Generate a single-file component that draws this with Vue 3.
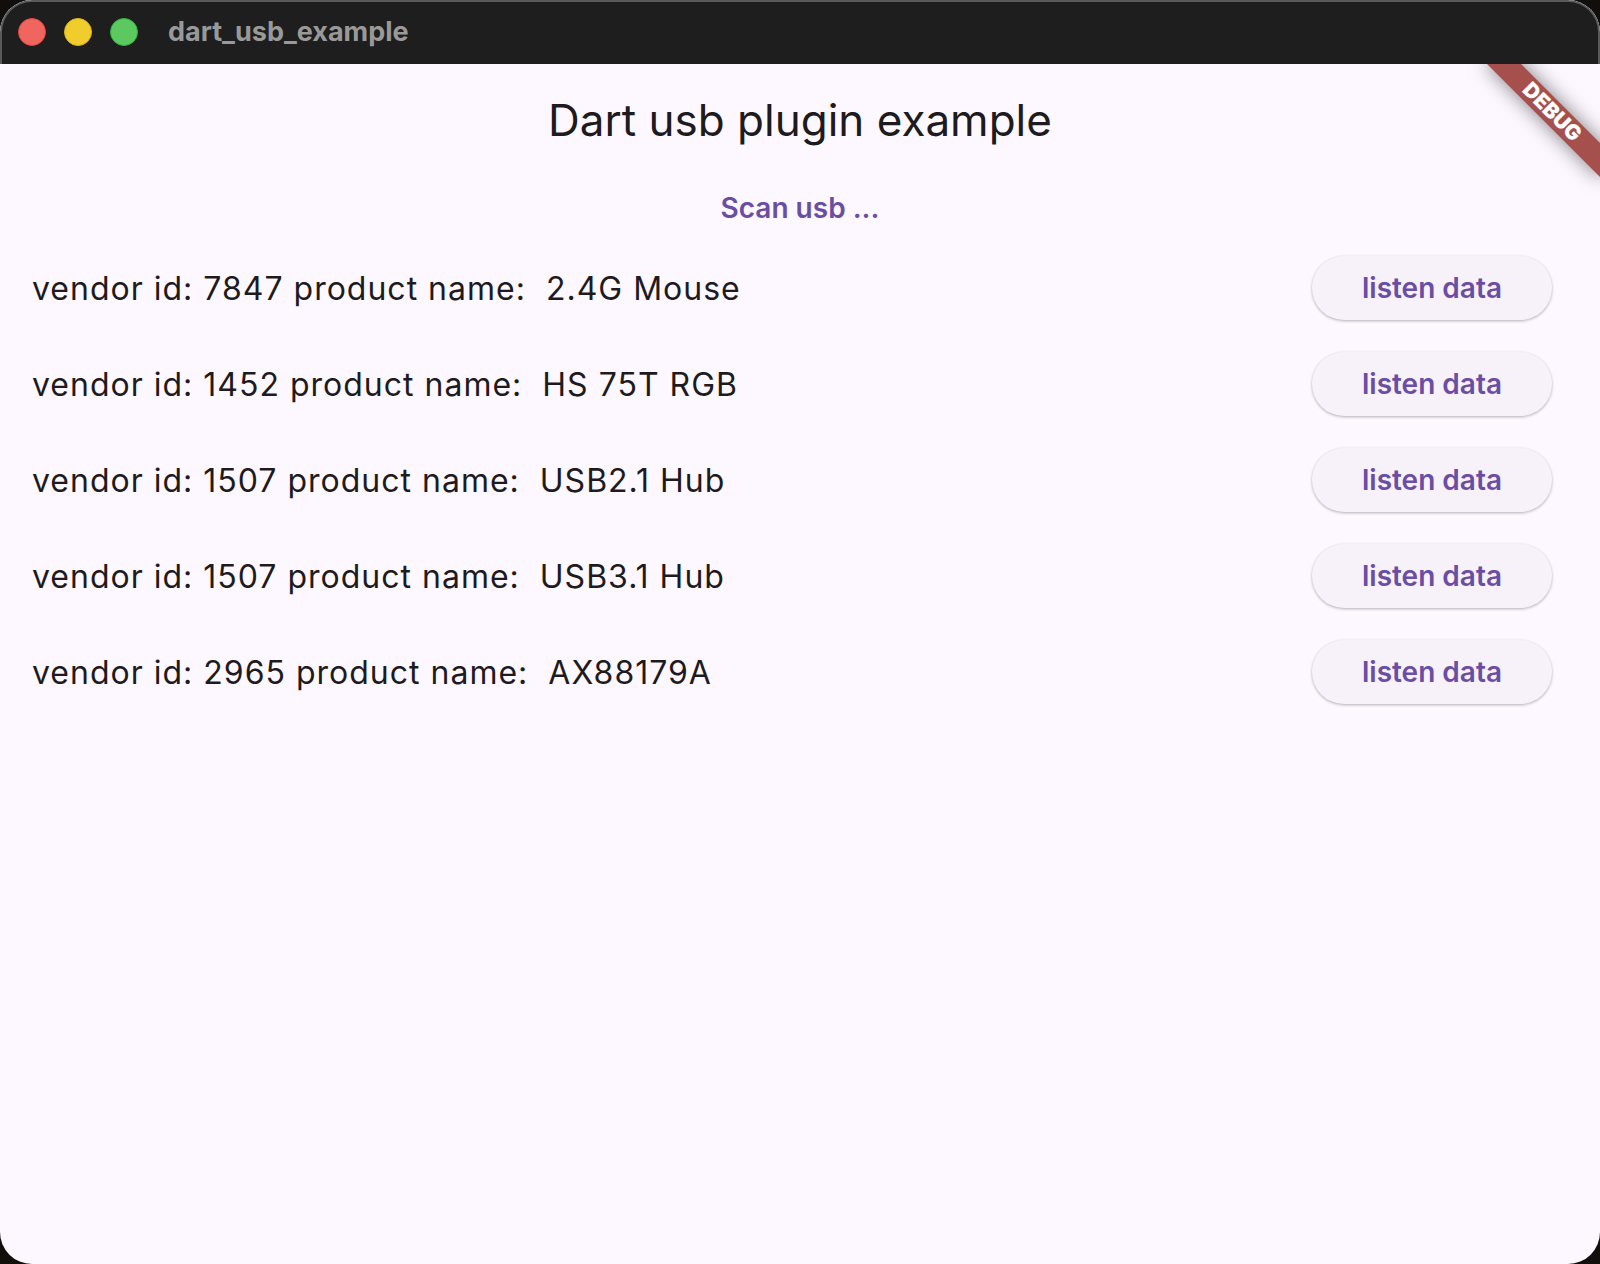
<script setup>
const devices = [
  { vendorId: 7847, name: '2.4G Mouse' },
  { vendorId: 1452, name: 'HS 75T RGB' },
  { vendorId: 1507, name: 'USB2.1 Hub' },
  { vendorId: 1507, name: 'USB3.1 Hub' },
  { vendorId: 2965, name: 'AX88179A' },
]
</script>

<template>
  <div class="window">
    <header class="titlebar">
      <button class="light close" type="button" aria-label="Close"></button>
      <button class="light minimize" type="button" aria-label="Minimize"></button>
      <button class="light zoom" type="button" aria-label="Zoom"></button>
      <span class="window-title">dart_usb_example</span>
    </header>
    <main class="content">
      <h1 class="app-title">Dart usb plugin example</h1>
      <button class="scan" type="button">Scan usb ...</button>
      <ul class="devices">
        <li v-for="(device, index) in devices" :key="index" class="device">
          <span class="label">vendor id: {{ device.vendorId }} product name:&nbsp; {{ device.name }}</span>
          <button class="listen" type="button">listen data</button>
        </li>
      </ul>
      <div class="banner">DEBUG</div>
    </main>
  </div>
</template>

<style>
body {
  margin: 0;
  background: #110e0c;
}
</style>

<style scoped>
.window {
  display: flex;
  flex-direction: column;
  min-height: 100vh;
  border-radius: 32px;
  overflow: hidden;
  background: #fdf8ff;
  color: #1d1b20;
  font-family: Inter, "Liberation Sans", sans-serif;
}

button {
  border: 0;
  padding: 0;
  font-family: inherit;
  cursor: pointer;
}

.titlebar {
  box-sizing: border-box;
  display: flex;
  align-items: center;
  gap: 18px;
  height: 64px;
  padding: 0 16px 2px;
  border: 2px solid #5a5a5a;
  border-bottom: 0;
  border-radius: 32px 32px 0 0;
  background: #1e1e1e;
}

.light {
  width: 28px;
  height: 28px;
  border: 1px solid;
  border-radius: 50%;
}

.close {
  background: #f0655f;
  border-color: #e0443f;
}

.minimize {
  background: #f0cd2c;
  border-color: #dfb516;
}

.zoom {
  background: #5bc960;
  border-color: #2fb53c;
}

.window-title {
  margin-left: 12px;
  color: #999;
  font-size: 27px;
  font-weight: 700;
  line-height: 32px;
}

.content {
  position: relative;
  flex: 1;
  display: flex;
  flex-direction: column;
  align-items: center;
  overflow: hidden;
}

.app-title {
  margin: 0;
  font-size: 44px;
  font-weight: 400;
  line-height: 112px;
}

.scan {
  height: 64px;
  padding: 0 24px;
  background: transparent;
  color: #6a4ea4;
  font-size: 28px;
  font-weight: 600;
}

.devices {
  align-self: stretch;
  margin: 0;
  padding: 0;
  list-style: none;
}

.device {
  display: flex;
  align-items: center;
  justify-content: space-between;
  height: 96px;
  padding: 0 48px 0 32px;
}

.label {
  padding-top: 2px;
  font-size: 32px;
  line-height: 48px;
  letter-spacing: 1px;
}

.listen {
  width: 240px;
  height: 64px;
  border-radius: 32px;
  background: #f7f2fa;
  box-shadow: 0 1px 3px rgba(0, 0, 0, 0.3);
  color: #6a4ea4;
  font-size: 28px;
  font-weight: 600;
}

.banner {
  position: absolute;
  top: 36px;
  right: -32px;
  width: 160px;
  transform: rotate(45deg);
  background: #a5504c;
  box-shadow: 0 0 20px rgba(0, 0, 0, 0.5);
  color: #fff;
  font-size: 21px;
  font-weight: 900;
  line-height: 24px;
  text-align: center;
}
</style>
